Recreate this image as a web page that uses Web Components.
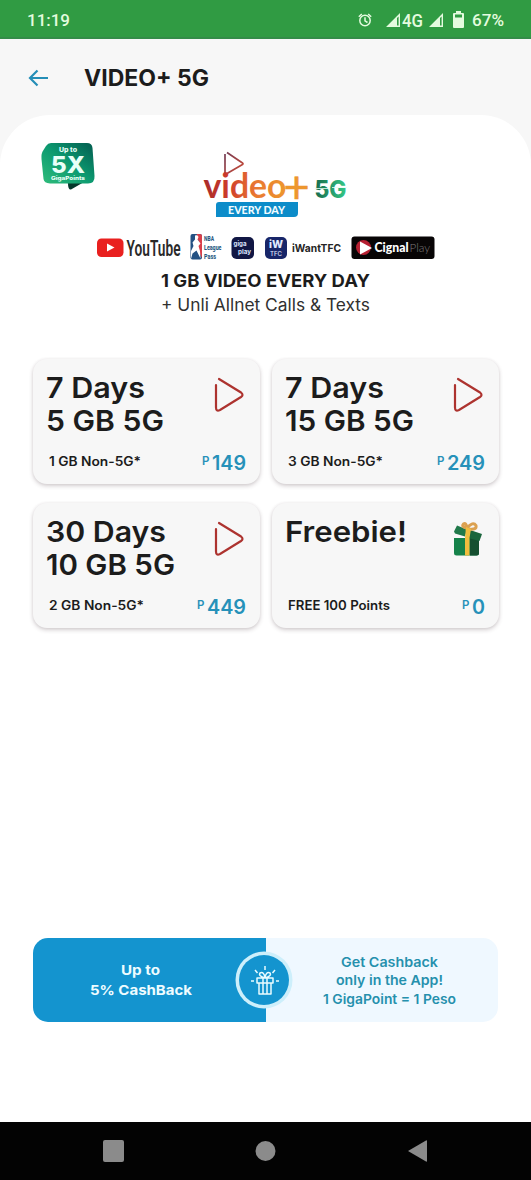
<!DOCTYPE html>
<html lang="en"><head><meta charset="utf-8"><title>VIDEO+ 5G</title>
<style>html,body{margin:0;height:100%;background:#f7f7f7;overflow:hidden}body{font-family:Inter,"Liberation Sans",sans-serif;color:#1c1c1c}</style></head>
<body><promo-app></promo-app>
<script>
const define=(name,html,setup)=>customElements.define(name,class extends HTMLElement{
  connectedCallback(){if(this.shadowRoot)return;const t=document.createElement('template');
    t.innerHTML=html;this.attachShadow({mode:'open'}).append(t.content.cloneNode(true));if(setup)setup.call(this,this.shadowRoot)}});

/* A single line of text stretched to a given width. */
define('fit-line',`<style>:host{display:block;white-space:nowrap}span{display:inline-block;transform-origin:0 50%}</style><span><slot></slot></span>`,
function(r){const s=r.querySelector('span'),w=+this.getAttribute('w'),n=s.getBoundingClientRect().width;
  this.style.width=w+'px';s.style.transform='scaleX('+(w/n).toFixed(4)+')'});

define('status-bar',`<style>:host{display:flex;box-sizing:border-box;height:39px;background:#309b43;border-bottom:2px solid #338c48;color:#e4fbdf;padding:2px 27px 0 27px;align-items:center;justify-content:space-between;font:500 17px/36px Roboto,sans-serif}
svg{display:block}.r{display:flex;align-items:center}</style>
<fit-line w="43">11:19</fit-line><div class="r">
<svg width="114" height="30" viewBox="358 5 114 30"><g fill="none" stroke="#e4fbdf" stroke-width="1.500"><circle cx="365" cy="20.500" r="5.200"/><path d="M365 17.300V20.900L367.500 22.500M358.800 16.700l3-2.700M371.200 16.700l-3-2.700"/></g>
<path fill="#e4fbdf" fill-rule="evenodd" d="M386 27L400 13V27zM397 18v7.500h1.600V16.500zM429 27L443 13V27zM440 18v7.500h1.600V16.500z"/>
<text x="402" y="27" font-family="Roboto" font-weight="500" font-size="19" fill="#e4fbdf" textLength="21" lengthAdjust="spacingAndGlyphs">4G</text>
<path fill="#e4fbdf" d="M456 11h5v2h2q1 0 1 1v13q0 1-1 1h-9q-1 0-1-1V14q0-1 1-1h2z"/><path fill="#309b43" d="M455 14.500h7v3h-7z"/></svg>
<fit-line w="32">67%</fit-line></div>`);

define('app-header',`<style>:host{display:flex;height:76px;align-items:center;padding-left:28px;font-size:22.500px;font-weight:700;line-height:30px}svg{margin:2px 34.500px 0 0}::slotted(fit-line){margin-top:2px}</style>
<svg width="21" height="18" viewBox="0 0 21 18" fill="none" stroke="#258eb7" stroke-width="2.200"><path d="M20 9H2M9.500 1.500L2 9l7.500 7.500"/></svg><slot></slot>`);

define('points-badge',`<style>:host{display:block}svg{display:block}</style>
<svg width="54" height="49" viewBox="41 142 54 49"><defs><linearGradient id="g" x1="0" y1="1" x2="1" y2="0"><stop stop-color="#30bd7b"/><stop offset=".5" stop-color="#0c9a70"/><stop offset="1" stop-color="#035b4f"/></linearGradient></defs>
<path fill="#05372b" d="M67 182H84L71 189.500Q68 190 68 183.500z"/><path fill="url(#g)" d="M51 143H87Q92 143 92.500 148L94.500 176Q95 183.500 88 183.500H50Q44 183 43.500 179L41.500 159Q41 153 43.500 150L46 146Q48 143 51 143z"/>
<g fill="#e8fff8" text-anchor="middle" font-family="Inter" font-weight="800"><text x="68" y="151.500" font-size="6" textLength="18" lengthAdjust="spacingAndGlyphs">Up to</text><text x="68" y="172.500" font-size="23" textLength="34" lengthAdjust="spacingAndGlyphs">5X</text><text x="68" y="179.500" font-size="5" textLength="34" lengthAdjust="spacingAndGlyphs">GigaPoints</text></g></svg>`);

define('video-logo',`<style>:host{display:block}svg{display:block}</style>
<svg width="146" height="70" viewBox="202 149 146 70"><defs><linearGradient id="v"><stop stop-color="#a82b2a"/><stop offset=".3" stop-color="#ce3c2b"/><stop offset=".62" stop-color="#e97732"/><stop offset="1" stop-color="#ed982d"/></linearGradient><linearGradient id="p" x1="0" y1="0" x2="1" y2="1"><stop stop-color="#733d55"/><stop offset="1" stop-color="#cf4a34"/></linearGradient><linearGradient id="f"><stop stop-color="#176a4c"/><stop offset="1" stop-color="#35c887"/></linearGradient></defs>
<path fill="none" stroke="url(#p)" stroke-width="1.700" stroke-linejoin="round" d="M225 154V172.500Q225 174.500 227 173.500L242.500 164.500Q243.500 163.700 242.500 163L227 152.500"/>
<text x="203.500" y="197.500" font-family="Lato" font-weight="700" font-size="35" fill="url(#v)" textLength="83" lengthAdjust="spacingAndGlyphs">video</text>
<text x="283.500" y="202.500" font-family="Lato" font-weight="400" font-size="45" fill="#ed962d" stroke="#ed962d" stroke-width=".6">+</text>
<text x="314.500" y="197.500" font-family="Inter" font-weight="800" font-size="24" fill="url(#f)" textLength="32" lengthAdjust="spacingAndGlyphs">5G</text><path stroke="#e8fff5" stroke-width=".8" d="M315 188.500H329M332 187.500H347"/>
<path fill="#0c8cc9" d="M219 202H298V213Q298 217 294 217H216V205Q216 202 219 202z"/><text x="228" y="213.500" font-family="Lato" font-weight="900" font-size="11" fill="#f2fcff" textLength="57" lengthAdjust="spacingAndGlyphs">EVERY DAY</text></svg>`);

define('partner-row',`<style>:host{display:block}svg{display:block}</style>
<svg width="340" height="29" viewBox="96 233 340 29"><rect x="97" y="238.500" width="26.500" height="18.500" rx="4.500" fill="#e9201f"/><path fill="#fff" d="M107 243.500V251.500L114.500 247.500z"/>
<text x="126.500" y="255.500" font-family="Roboto" font-weight="600" font-size="21.500" fill="#292929" textLength="54" lengthAdjust="spacingAndGlyphs">YouTube</text>
<rect x="190.500" y="234" width="11.500" height="25.500" rx="2" fill="#245284"/><path fill="#d83f4a" d="M197 234h3q2 0 2 2v22l-5-10 2-7-3-3z"/><path fill="#fff" d="M195 235.500q3-1 3.500 1.500l-1 2.500 3 4-2 2.500 1.500 5 .5 7.500-4-8-4 3-1.500 5.500v-8l2.500-5-1-3.500 2.500-3z"/>
<g font-family="Roboto" font-weight="800" font-size="7.500" fill="#285982"><text x="204" y="240.500" textLength="10" lengthAdjust="spacingAndGlyphs">NBA</text><text x="204" y="249.500" textLength="17.500" lengthAdjust="spacingAndGlyphs">League</text><text x="204" y="258.500" textLength="12" lengthAdjust="spacingAndGlyphs">Pass</text></g>
<rect x="231.500" y="237" width="22.500" height="22" rx="5" fill="#111744"/><g font-family="Inter" font-weight="700" font-size="6" fill="#dce5ff"><text x="233.500" y="246" textLength="13" lengthAdjust="spacingAndGlyphs">giga</text><text x="238" y="253.500" textLength="13" lengthAdjust="spacingAndGlyphs">play</text></g>
<rect x="265" y="237" width="22" height="22" rx="5" fill="#182669"/><g fill="#e0eaff" font-family="Inter" font-weight="800"><text x="269" y="248" font-size="10" textLength="14" lengthAdjust="spacingAndGlyphs">iW</text><text x="270" y="256" font-size="6" font-weight="500" textLength="12">TFC</text></g>
<text x="292" y="252" font-family="Inter" font-weight="700" font-size="11" fill="#252525" textLength="49" lengthAdjust="spacingAndGlyphs">iWantTFC</text>
<rect x="351.500" y="236.500" width="83" height="22.500" rx="3" fill="#080506"/><circle cx="363.500" cy="247.500" r="7.500" fill="#b72032"/><path fill="#fff" d="M360 241.500V254.500L372 248z"/><text x="374.500" y="252" font-family="Lato" font-weight="900" font-size="12.500" fill="#fff" textLength="34" lengthAdjust="spacingAndGlyphs">Cignal</text><text x="409.500" y="252" font-family="Lato" font-weight="300" font-size="12.500" fill="#7e7a7c" textLength="20.500" lengthAdjust="spacingAndGlyphs">Play</text></svg>`);

define('play-icon',`<style>:host{display:block}svg{display:block}</style><svg width="32" height="38" viewBox="1 0 32 38" fill="none" stroke="#ad332f" stroke-width="2.200" stroke-linecap="round"><path d="M3 9V31.500Q3 36 7 34L28 21Q31 19 28 16.500L6 3"/></svg>`);
define('gift-icon',`<style>:host{display:block}svg{display:block}</style><svg width="32" height="38" viewBox="453 520 32 38"><path fill="#15824a" d="M454 538H479V553Q479 555.500 476.500 555.500H456.500Q454 555.500 454 553z"/><path fill="#154f30" d="M470 538h9v15q0 2.500-2.500 2.500H470z"/><path fill="#20794a" d="M454 531.500L457 525.500L467 529.500L465 536.500L455 533.500z"/><path fill="#1b663d" d="M470 530L482 534L479.500 541L468 538z"/><path fill="none" stroke="#dba151" stroke-width="3" d="M467 528Q461 527 463.500 524Q466 522 467 528Q473 521 476 525.500Q477 530 469 529"/><path fill="#f0bd3e" d="M466 527l5 2-1.500 9v17.500H465V538z"/></svg>`);

define('offer-card',`<style>:host{display:flex;flex-direction:column;justify-content:space-between;box-sizing:border-box;background:#f7f7f7;border-radius:14px;padding:11.500px 14.500px 10px 13px;box-shadow:0 2px 4px rgba(60,35,45,.22),0 0 3px rgba(90,60,70,.07)}
.top,.bot{display:flex;justify-content:space-between}.t{font-size:29px;font-weight:600;line-height:33px}.bot{align-items:flex-end;font-size:12.700px;font-weight:600;line-height:22px;padding-left:3px}.note{padding-bottom:1px}.price{display:flex;gap:2px;align-items:flex-end;color:#2691b9;font-size:19.500px}.price small{font-size:11.500px;font-weight:600;padding-bottom:2px}::slotted(play-icon),::slotted(gift-icon){margin-top:5px}</style>
<div class="top"><div class="t"><slot name="title"></slot></div><slot name="icon"></slot></div><div class="bot"><div class="note"><slot name="note"></slot></div><div class="price"><small>P</small><slot name="price"></slot></div></div>`);

define('offer-grid',`<style>:host{display:grid;grid-template-columns:227px 227px;grid-auto-rows:125px;gap:19px 12px}</style>
<offer-card><fit-line slot="title" w="99">7 Days</fit-line><fit-line slot="title" w="118">5 GB 5G</fit-line><play-icon slot="icon"></play-icon><fit-line slot="note" w="92">1 GB Non-5G*</fit-line><fit-line slot="price" w="34">149</fit-line></offer-card>
<offer-card><fit-line slot="title" w="99">7 Days</fit-line><fit-line slot="title" w="129">15 GB 5G</fit-line><play-icon slot="icon"></play-icon><fit-line slot="note" w="95">3 GB Non-5G*</fit-line><fit-line slot="price" w="38">249</fit-line></offer-card>
<offer-card><fit-line slot="title" w="120">30 Days</fit-line><fit-line slot="title" w="129">10 GB 5G</fit-line><play-icon slot="icon"></play-icon><fit-line slot="note" w="95">2 GB Non-5G*</fit-line><fit-line slot="price" w="39">449</fit-line></offer-card>
<offer-card><fit-line slot="title" w="122">Freebie!</fit-line><gift-icon slot="icon"></gift-icon><fit-line slot="note" w="102">FREE 100 Points</fit-line><fit-line slot="price" w="13">0</fit-line></offer-card>`);

define('cashback-banner',`<style>:host{display:grid;grid-template-columns:1fr 1fr;position:relative;height:84px;width:465px;border-radius:15px;overflow:hidden;font-weight:600}
div{display:flex;flex-direction:column;align-items:center;justify-content:center}.l{background:#1494cf;color:#eefcff;font-size:13.500px;line-height:20px;font-weight:700;padding-right:17px}.r{background:#eff8ff;color:#2590ad;font-size:13.500px;line-height:18.500px;padding:1px 0 0 16px}svg{position:absolute;left:202px;top:12px}</style>
<div class="l"><fit-line w="39">Up to</fit-line><fit-line w="102">5% CashBack</fit-line></div><div class="r"><fit-line w="97">Get Cashback</fit-line><fit-line w="107">only in the App!</fit-line><fit-line w="133">1 GigaPoint = 1 Peso</fit-line></div>
<svg width="60" height="60" viewBox="-29 -30 60 60"><circle r="28.500" fill="#cdeffb"/><circle r="25" fill="#1494cf"/><g transform="translate(1 1)" fill="none" stroke="#e9fbff" stroke-width="1.500" stroke-linejoin="round"><path d="M-8-3H8V2H-8zM-6 2V13H6V2M-2-3V13M2-3V13M0-3Q-7-5-5-8Q-1-10 0-3Q1-10 5-8Q7-5 0-3M0-15v4M-10-11l2.500 3M10-11l-2.500 3M-14 0h3M11 0h3"/></g></svg>`);

define('nav-bar',`<style>:host{display:block;height:58px;background:#030303}svg{display:block}</style><svg width="531" height="58"><g fill="#8b8b8b"><rect x="103" y="18" width="21" height="22" rx="2"/><circle cx="265.500" cy="29" r="10"/><path d="M408 29L426 18.500Q427 18 427 19V39Q427 40 426 39.500z"/></g></svg>`);

define('promo-app',`<style>:host{display:flex;flex-direction:column;width:531px;height:1180px}main{flex:1;background:#fff;border-radius:50px 50px 0 0;display:flex;flex-direction:column;box-sizing:border-box;padding:27px 33px 100px}
.brand{display:flex;height:91px;align-items:flex-start;padding-left:8px}video-logo{margin:7px 0 0 107px}partner-row{margin-left:63px}.desc{padding-left:128px;height:97px;line-height:24px;box-sizing:border-box;padding-top:7px}.a{font-size:17.700px;font-weight:700}.b{font-size:17px;color:#303030}cashback-banner{margin-top:auto}</style>
<status-bar></status-bar><app-header><fit-line w="125">VIDEO+ 5G</fit-line></app-header><main><div class="brand"><points-badge></points-badge><video-logo></video-logo></div><partner-row></partner-row><div class="desc"><fit-line class="a" w="209">1 GB VIDEO EVERY DAY</fit-line><fit-line class="b" w="209">+ Unli Allnet Calls &amp; Texts</fit-line></div><offer-grid></offer-grid><cashback-banner></cashback-banner></main><nav-bar></nav-bar>`);
</script></body></html>
